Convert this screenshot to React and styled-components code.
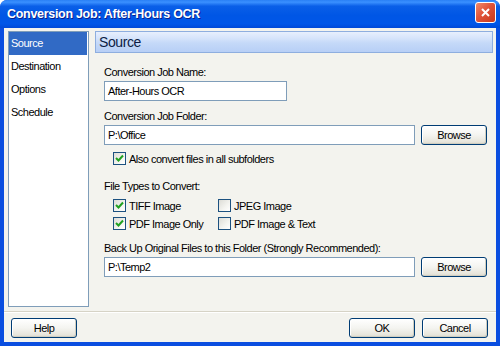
import React from "react";
import styled, { createGlobalStyle } from "styled-components";

const GlobalStyle = createGlobalStyle`
  html, body {
    margin: 0;
    padding: 0;
    background: #fff;
  }
  body {
    font-family: "Liberation Sans", Arial, sans-serif;
    font-size: 11px;
    letter-spacing: -0.5px;
    color: #000;
  }
`;

const Window = styled.div`
  width: 500px;
  height: 346px;
  box-sizing: border-box;
  display: flex;
  flex-direction: column;
  background: #0a4ee0;
  border-radius: 7px 7px 0 0;
  overflow: hidden;
`;
const TitleBar = styled.div`
  height: 28px;
  flex: none;
  display: flex;
  align-items: center;
  justify-content: space-between;
  padding: 0 4px 0 7px;
  background: linear-gradient(
    180deg,
    #2a80f5 0%,
    #3a90ff 8%,
    #0a5fe8 22%,
    #0056e5 55%,
    #0056e8 85%,
    #0049d8 100%
  );
`;
const Title = styled.span`
  font-family: "Liberation Sans", Arial, sans-serif;
  font-weight: bold;
  font-size: 12.5px;
  letter-spacing: -0.3px;
  color: #fff;
  text-shadow: 1px 1px 0 #0a1e8c;
`;
const CloseButton = styled.div`
  width: 19px;
  height: 19px;
  margin-top: -3px;
  border: 1px solid #fff;
  border-radius: 3px;
  background: linear-gradient(135deg, #f08a6c 0%, #e0543a 45%, #c8391c 100%);
  display: flex;
  align-items: center;
  justify-content: center;
`;
const Client = styled.div`
  flex: 1;
  margin: 0 4px 4px 4px;
  background: #f3f3ee;
  display: flex;
  flex-direction: column;
`;
const Body = styled.div`
  display: flex;
  padding: 3px 3px 0 4px;
  height: 276px;
`;
const Nav = styled.div`
  width: 81px;
  box-sizing: border-box;
  background: #fff;
  border: 1px solid #7f9db9;
  display: flex;
  flex-direction: column;
`;
const NavItem = styled.div`
  height: 23px;
  line-height: 23px;
  padding-left: 2px;
  margin-right: 1px;
  background: ${(p) => (p.$active ? "#316ac5" : "transparent")};
  color: ${(p) => (p.$active ? "#fff" : "#000")};
`;
const Main = styled.div`
  flex: 1;
  margin-left: 6px;
  display: flex;
  flex-direction: column;
`;
const Header = styled.div`
  height: 22px;
  box-sizing: border-box;
  border: 1px solid #8eaedf;
  padding-left: 3px;
  display: flex;
  align-items: center;
  font-size: 14px;
  letter-spacing: -0.4px;
  color: #0c1c44;
  background: linear-gradient(
    180deg,
    #e7effd 0%,
    #d6e4fb 30%,
    #c5d9f8 55%,
    #b7cff6 100%
  );
`;
const Form = styled.div`
  display: flex;
  flex-direction: column;
  padding: 0 6px 0 9px;
`;
const Label = styled.div`
  height: 13px;
  line-height: 13px;
  margin-top: ${(p) => p.$top}px;
  margin-bottom: 2px;
`;
const Row = styled.div`
  display: flex;
  gap: 6px;
`;
const TextBox = styled.div`
  box-sizing: border-box;
  height: 20px;
  width: ${(p) => (p.$width ? `${p.$width}px` : "auto")};
  flex: ${(p) => (p.$width ? "none" : "1")};
  border: 1px solid #7f9db9;
  background: #fff;
  padding-left: 3px;
  line-height: 18px;
`;
const Button = styled.div`
  box-sizing: border-box;
  width: 66px;
  height: 20px;
  border: 1px solid #003c74;
  border-radius: 3px;
  background: linear-gradient(180deg, #ffffff 0%, #f4f4f0 50%, #e6e4da 90%, #d6d0c5 100%);
  box-shadow: inset -1px -1px 0 #d0cec0, inset 1px 1px 0 #fff;
  display: flex;
  align-items: center;
  justify-content: center;
`;
const CheckGrid = styled.div`
  display: grid;
  grid-template-columns: ${(p) => (p.$single ? "auto" : "105px auto")};
  justify-content: start;
  row-gap: 5px;
  margin-left: 9px;
  margin-top: ${(p) => p.$top}px;
`;
const CheckItem = styled.div`
  display: flex;
  align-items: center;
  height: 13px;
  gap: 3px;
  white-space: nowrap;
`;
const Box = styled.div`
  width: 13px;
  height: 13px;
  box-sizing: border-box;
  border: 1px solid #1c5180;
  background: linear-gradient(135deg, #dcdcd6 0%, #f4f4f0 60%, #fff 100%);
  display: flex;
  align-items: center;
  justify-content: center;
`;
const Separator = styled.div`
  margin-top: 4px;
  height: 1px;
  background: #d6d3c6;
  border-bottom: 1px solid #fff;
`;
const Footer = styled.div`
  display: flex;
  justify-content: space-between;
  padding: 5px 8px 0 7px;
`;
const ButtonGroup = styled.div`
  display: flex;
  gap: 7px;
`;

const Check = ({ checked, children }) => (
  <CheckItem>
    <Box>
      {checked && (
        <svg width="9" height="9" viewBox="0 0 9 9">
          <path d="M1 4 L3.5 6.5 L8 1.5" fill="none" stroke="#21a121" strokeWidth="2" />
        </svg>
      )}
    </Box>
    <span>{children}</span>
  </CheckItem>
);

const App = () => {
  return (
    <>
      <GlobalStyle />
      <Window>
        <TitleBar>
          <Title>Conversion Job: After-Hours OCR</Title>
          <CloseButton>
            <svg width="11" height="11" viewBox="0 0 11 11">
              <path d="M2 2 L9 9 M9 2 L2 9" stroke="#fff" strokeWidth="2" />
            </svg>
          </CloseButton>
        </TitleBar>
        <Client>
          <Body>
            <Nav>
              <NavItem $active>Source</NavItem>
              <NavItem>Destination</NavItem>
              <NavItem>Options</NavItem>
              <NavItem>Schedule</NavItem>
            </Nav>
            <Main>
              <Header>Source</Header>
              <Form>
                <Label $top={13}>Conversion Job Name:</Label>
                <TextBox $width={183}>After-Hours OCR</TextBox>
                <Label $top={9}>Conversion Job Folder:</Label>
                <Row>
                  <TextBox>P:\Office</TextBox>
                  <Button>Browse</Button>
                </Row>
                <CheckGrid $single $top={7}>
                  <Check checked>Also convert files in all subfolders</Check>
                </CheckGrid>
                <Label $top={15}>File Types to Convert:</Label>
                <CheckGrid $top={4}>
                  <Check checked>TIFF Image</Check>
                  <Check>JPEG Image</Check>
                  <Check checked>PDF Image Only</Check>
                  <Check>PDF Image &amp; Text</Check>
                </CheckGrid>
                <Label $top={12}>Back Up Original Files to this Folder (Strongly Recommended):</Label>
                <Row>
                  <TextBox>P:\Temp2</TextBox>
                  <Button>Browse</Button>
                </Row>
              </Form>
            </Main>
          </Body>
          <Separator />
          <Footer>
            <Button>Help</Button>
            <ButtonGroup>
              <Button>OK</Button>
              <Button>Cancel</Button>
            </ButtonGroup>
          </Footer>
        </Client>
      </Window>
    </>
  );
};

export default App;
